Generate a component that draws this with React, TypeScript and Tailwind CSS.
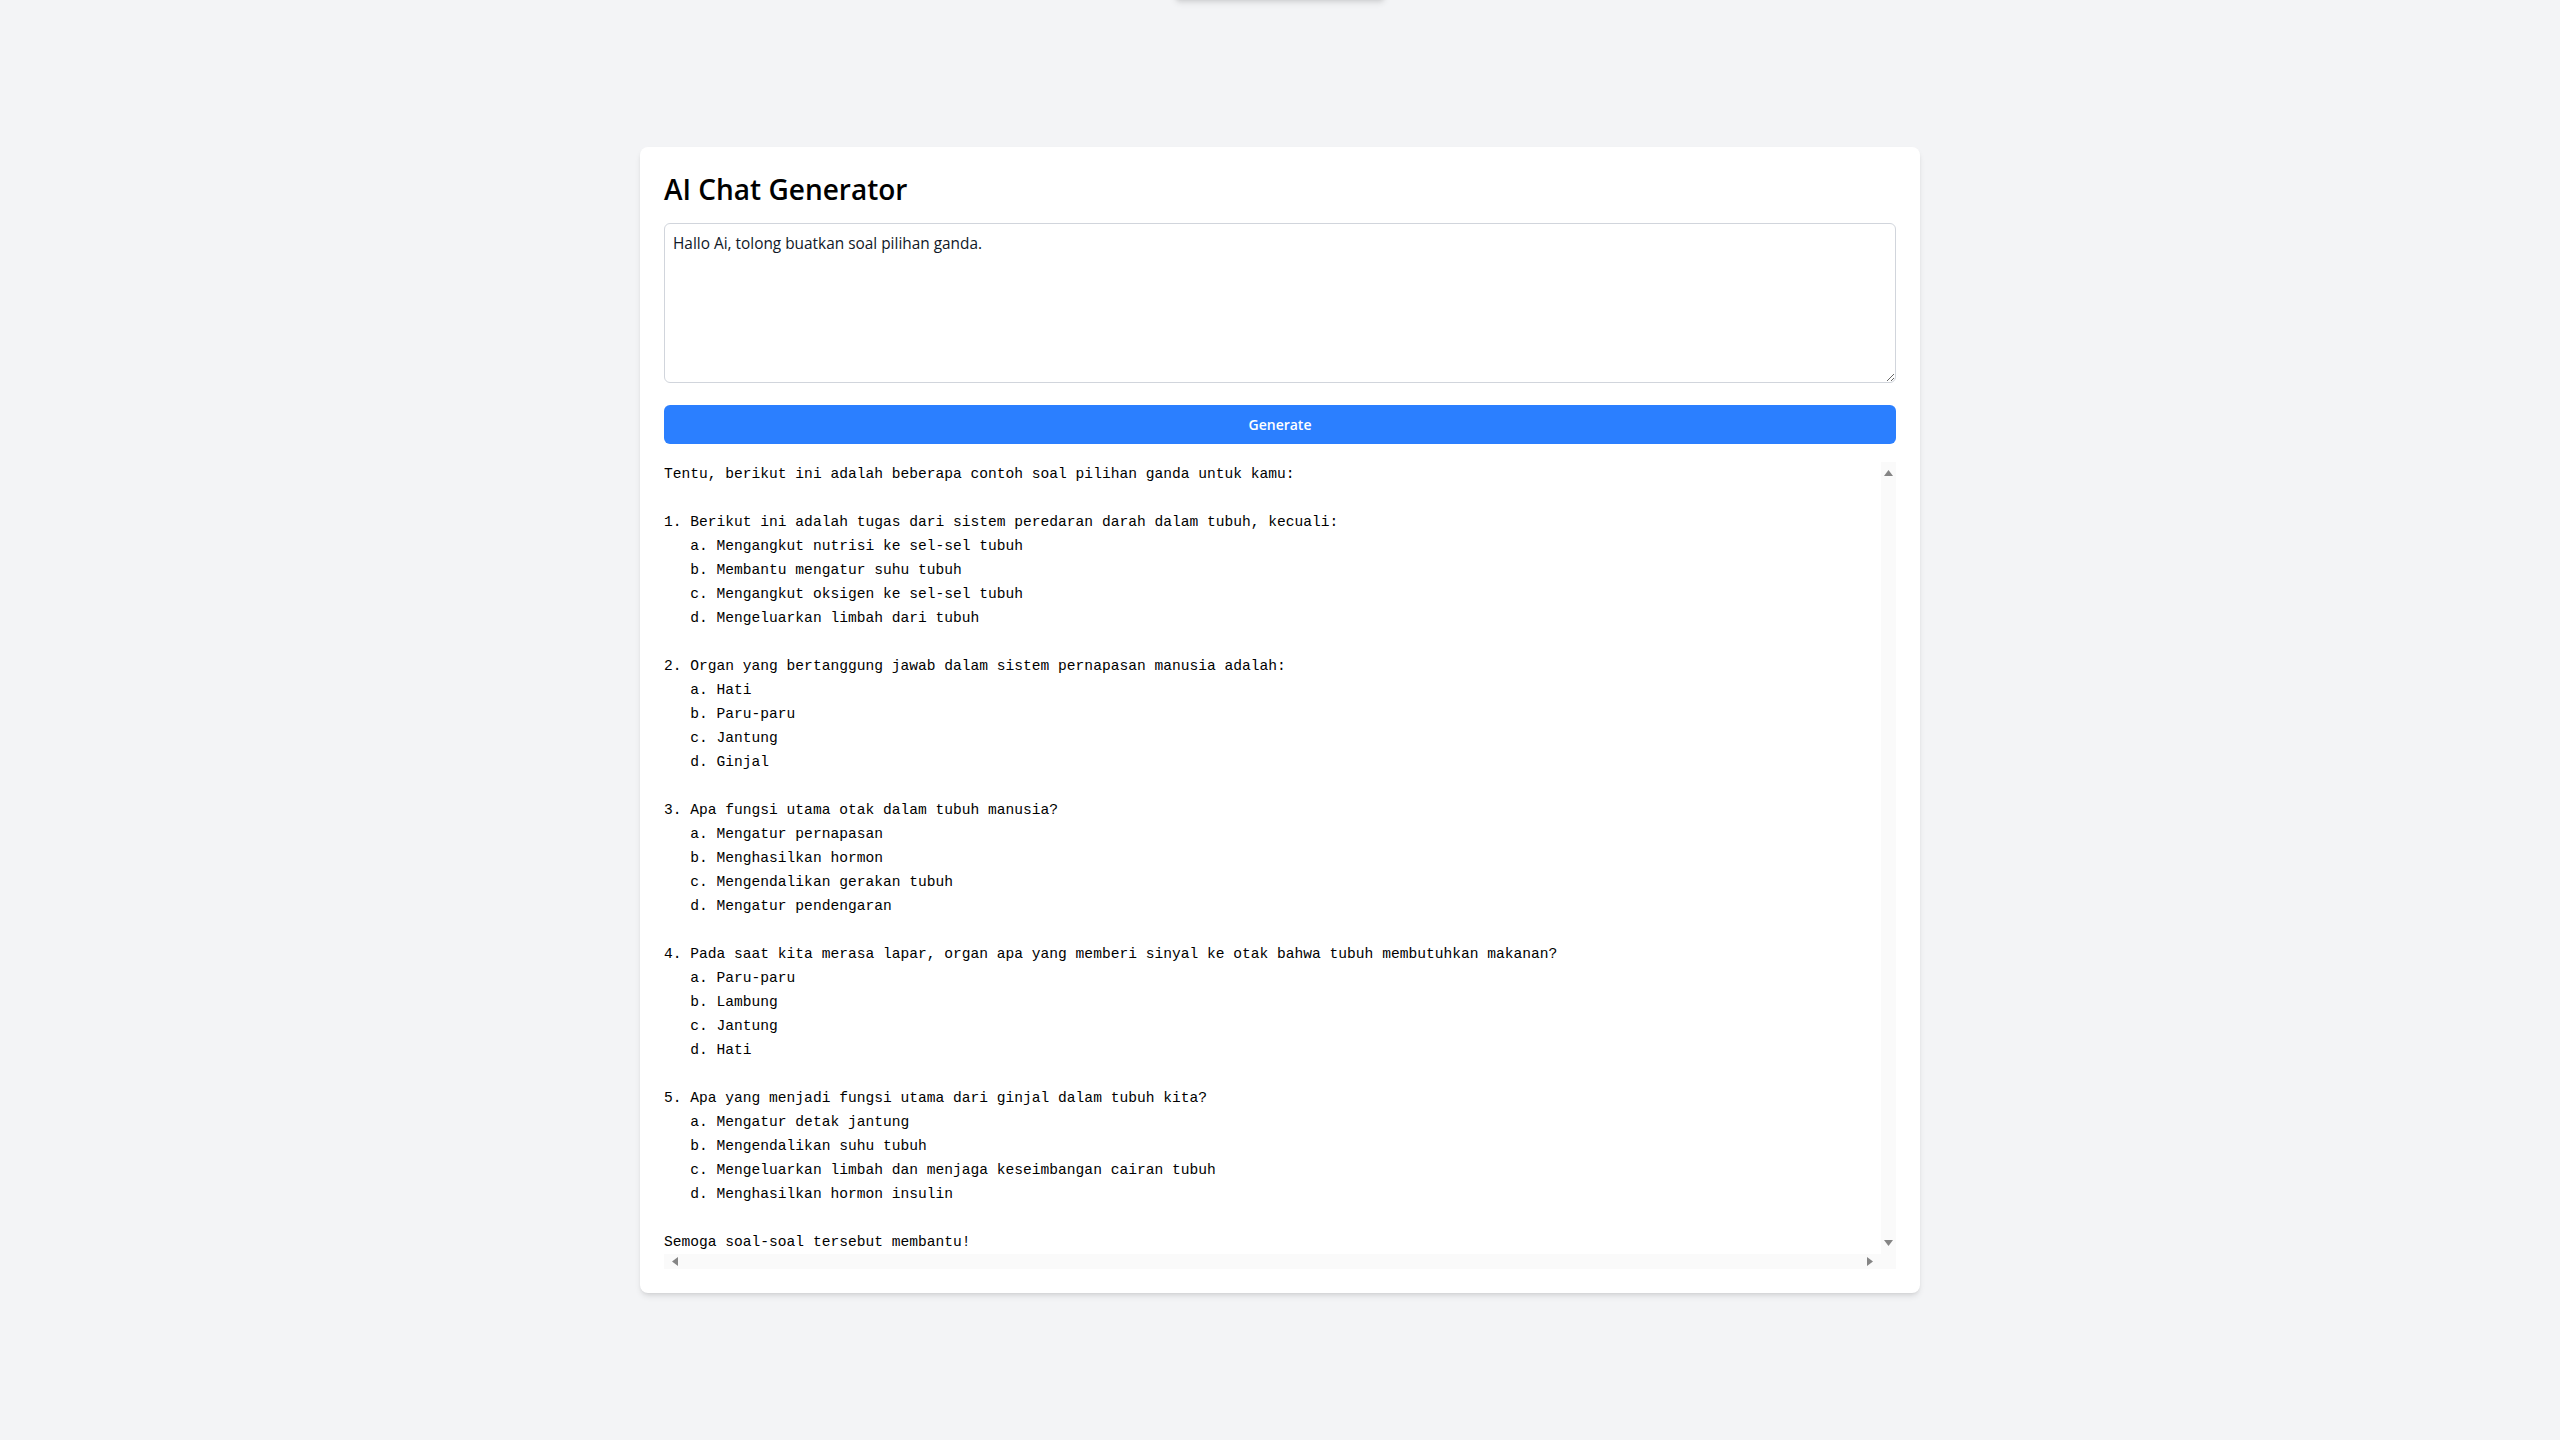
import { useState } from 'react';

const answer = `Tentu, berikut ini adalah beberapa contoh soal pilihan ganda untuk kamu:

1. Berikut ini adalah tugas dari sistem peredaran darah dalam tubuh, kecuali:
   a. Mengangkut nutrisi ke sel-sel tubuh
   b. Membantu mengatur suhu tubuh
   c. Mengangkut oksigen ke sel-sel tubuh
   d. Mengeluarkan limbah dari tubuh

2. Organ yang bertanggung jawab dalam sistem pernapasan manusia adalah:
   a. Hati
   b. Paru-paru
   c. Jantung
   d. Ginjal

3. Apa fungsi utama otak dalam tubuh manusia?
   a. Mengatur pernapasan
   b. Menghasilkan hormon
   c. Mengendalikan gerakan tubuh
   d. Mengatur pendengaran

4. Pada saat kita merasa lapar, organ apa yang memberi sinyal ke otak bahwa tubuh membutuhkan makanan?
   a. Paru-paru
   b. Lambung
   c. Jantung
   d. Hati

5. Apa yang menjadi fungsi utama dari ginjal dalam tubuh kita?
   a. Mengatur detak jantung
   b. Mengendalikan suhu tubuh
   c. Mengeluarkan limbah dan menjaga keseimbangan cairan tubuh
   d. Menghasilkan hormon insulin

Semoga soal-soal tersebut membantu!`;

// tiny scrollbar arrow, classic style
function Arrow({ dir }: { dir: 'up' | 'down' | 'left' | 'right' }) {
  const pts = {
    up: '0,6 4.5,0 9,6',
    down: '0,0 9,0 4.5,6',
    left: '6,0 6,9 0,4.5',
    right: '0,0 0,9 6,4.5',
  }[dir];
  const vertical = dir === 'up' || dir === 'down';
  return (
    <svg width={vertical ? 9 : 6} height={vertical ? 6 : 9} viewBox={vertical ? '0 0 9 6' : '0 0 6 9'}>
      <polygon points={pts} fill="#858585" />
    </svg>
  );
}

export default function App() {
  const [prompt, setPrompt] = useState('Hallo Ai, tolong buatkan soal pilihan ganda.');

  return (
    <div className="relative min-h-screen bg-gray-100 flex items-center justify-center font-['Open_Sans',sans-serif] overflow-hidden">
      {/* toast sitting just above the viewport */}
      <div className="absolute left-1/2 -translate-x-1/2 -top-12 h-12 w-[212px] rounded-md bg-white shadow-md" />

      <div className="w-[1280px] bg-white rounded-lg shadow-md p-6">
        <h1 className="text-[28px] leading-9 font-semibold text-black mb-4">AI Chat Generator</h1>
        <textarea
          value={prompt}
          onChange={(e) => setPrompt(e.target.value)}
          className="w-full h-40 px-2 py-2 border border-gray-300 rounded-md text-[15.4px] text-gray-900 mb-4 outline-none"
        />
        <button className="w-full h-[39px] bg-blue-500 text-white text-sm font-semibold rounded-md">Generate</button>

        <div className="mt-[18px] grid grid-cols-[1fr_15px] grid-rows-[auto_15px]">
          <pre className="overflow-hidden font-['Liberation_Mono',monospace] text-[14.6px] leading-6 text-black">
            {answer}
          </pre>
          <div className="bg-[#fafafa] flex flex-col items-center justify-between pt-2 pb-2">
            <Arrow dir="up" />
            <Arrow dir="down" />
          </div>
          <div className="bg-[#fafafa] flex items-center justify-between pl-2 pr-2">
            <Arrow dir="left" />
            <Arrow dir="right" />
          </div>
          <div className="bg-[#fafafa]" />
        </div>
      </div>
    </div>
  );
}
